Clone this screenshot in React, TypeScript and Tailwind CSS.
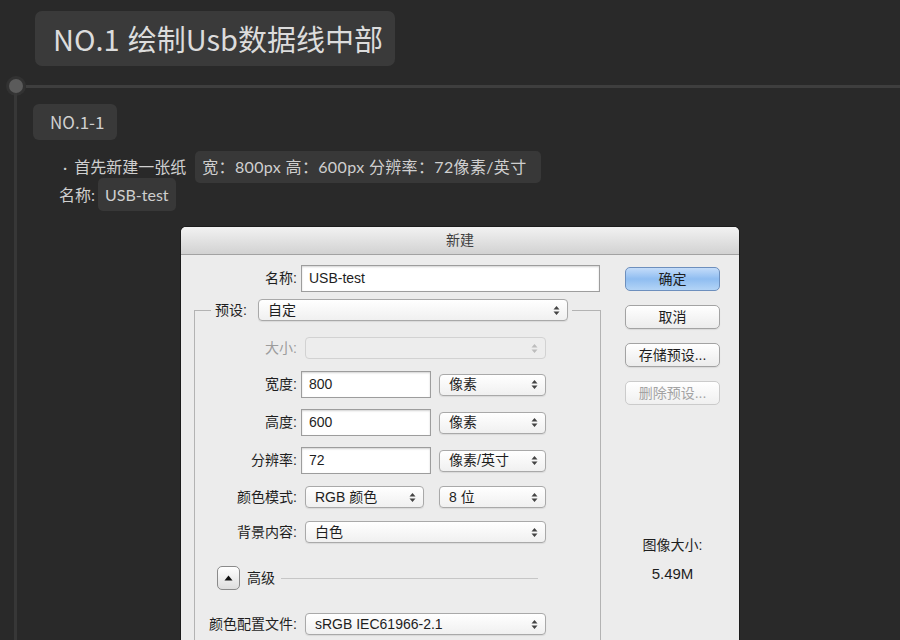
import React from 'react';

const Arrows = ({ light }: { light?: boolean }) => (
  <svg width="7" height="11" viewBox="0 0 7 11" className={light ? 'text-[#bdbdbd]' : 'text-[#444]'}>
    <path d="M0.5 4.5 L3.5 1 L6.5 4.5 Z M0.5 6.5 L3.5 10 L6.5 6.5 Z" fill="currentColor" />
  </svg>
);

const Select = ({ value, className, disabled }: { value?: string; className: string; disabled?: boolean }) => (
  <div
    className={`flex h-[22px] items-center justify-between rounded-[4px] border pl-[9px] pr-[7px] ${
      disabled
        ? 'border-[#d2d2d2] bg-[#ededed]'
        : 'border-[#a9a9a9] bg-linear-to-b from-white to-[#f0f0f0] shadow-[0_1px_1px_rgba(0,0,0,0.08)]'
    } ${className}`}
  >
    <span>{value}</span>
    <Arrows light={disabled} />
  </div>
);

const Input = ({ value, className }: { value: string; className: string }) => (
  <div
    className={`flex h-[27px] items-center border border-[#9d9d9d] bg-white pl-[7px] shadow-[inset_0_1px_2px_rgba(0,0,0,0.18)] ${className}`}
  >
    {value}
  </div>
);

const Label = ({ text, muted }: { text: string; muted?: boolean }) => (
  <div className={`w-[102px] text-right ${muted ? 'text-[#9c9c9c]' : ''}`}>{text}</div>
);

const Button = ({ text, primary, disabled }: { text: string; primary?: boolean; disabled?: boolean }) => (
  <div
    className={`flex h-[24px] w-[95px] items-center justify-center rounded-[5px] border ${
      primary
        ? 'border-[#6d8fbd] bg-linear-to-b from-[#c4dcf9] via-[#8fbdf1] to-[#b3d4f6]'
        : disabled
          ? 'border-[#cbcbcb] bg-linear-to-b from-white to-[#f0f0f0] text-[#a3a3a3]'
          : 'border-[#a3a3a3] bg-linear-to-b from-white to-[#ececec] shadow-[0_1px_1px_rgba(0,0,0,0.08)]'
    }`}
  >
    {text}
  </div>
);

export default function App() {
  return (
    <div className="flex h-[640px] w-[900px] flex-col overflow-hidden bg-[#292929] font-['Lato','Noto_Sans_CJK_SC',sans-serif]">
      {/* section title */}
      <div className="ml-[35px] mt-[11px] flex h-[55px] w-fit shrink-0 items-center rounded-[7px] bg-[#3a3a3a] pl-[18px] pr-[12px] font-['Noto_Sans_CJK_SC',sans-serif] text-[29px] text-[#dcdcdc]">
        <span>NO.1</span>
        <span className="ml-[8px]">绘制Usb数据线中部</span>
      </div>

      {/* timeline */}
      <div className="mt-[10px] flex h-[20px] shrink-0 items-center">
        <div className="ml-[6px] h-[20px] w-[20px] rounded-full bg-[#323232] p-[3px]">
          <div className="h-full w-full rounded-full bg-[#5b5b5b]" />
        </div>
        <div className="h-[3px] flex-1 bg-[#3e3e3e]" />
      </div>

      <div className="flex flex-1">
        <div className="-mt-[3px] ml-[14px] w-[3px] bg-[#373737]" />
        <div className="ml-[16px] flex flex-col items-start">
          <div className="mt-[8px] flex h-[36px] shrink-0 items-center rounded-[6px] bg-[#393939] pl-[17px] pr-[13px] font-['Noto_Sans_CJK_SC',sans-serif] text-[17px] text-[#d0d0d0]">
            NO.1-1
          </div>

          <div className="ml-[30px] mt-[11px] flex h-[32px] shrink-0 items-center text-[16px] text-[#cfcfcf]">
            <span>·</span>
            <span className="ml-[7px]">首先新建一张纸</span>
            <span className="ml-[9px] flex h-[32px] items-center rounded-[5px] bg-[#383838] pl-[7px] pr-[14px] tracking-[0.35px]">
              宽：800px 高：600px 分辨率：72像素/英寸
            </span>
          </div>
          <div className="-mt-[5px] ml-[26px] flex h-[33px] shrink-0 items-center text-[16px] text-[#cfcfcf]">
            <span>名称:</span>
            <span className="ml-[3px] flex h-[33px] items-center rounded-[5px] bg-[#383838] px-[7px]">USB-test</span>
          </div>

          {/* new document dialog */}
          <div className="ml-[148px] mt-[16px] h-[420px] w-[558px] shrink-0 rounded-t-[5px] bg-[#ececec] font-['Liberation_Sans','Noto_Sans_CJK_SC',sans-serif] text-[14px] text-[#1e1e1e] shadow-[0_0_0_1px_#1c1c1c]">
            <div className="flex h-[28px] items-center justify-center rounded-t-[5px] border-b border-[#a2a2a2] bg-linear-to-b from-[#f2f2f2] to-[#d2d2d2] text-[#3e3e3e]">
              新建
            </div>

            <div className="flex">
              <div className="w-[444px]">
                <div className="mt-[10px] flex items-center">
                  <div className="w-[116px] text-right">名称:</div>
                  <Input value="USB-test" className="ml-[4px] w-[299px]" />
                </div>

                <fieldset className="ml-[13px] mt-[7px] h-[400px] w-[407px] border border-[#b3b3b3]">
                  <legend className="ml-[16px] px-[4px]">
                    <div className="flex items-center">
                      <span>预设:</span>
                      <Select value="自定" className="ml-[11px] w-[310px]" />
                    </div>
                  </legend>

                  <div className="mt-[16px] flex h-[22px] items-center">
                    <Label text="大小:" muted />
                    <Select className="ml-[8px] w-[241px]" disabled />
                  </div>

                  <div className="mt-[12px] flex h-[27px] items-center">
                    <Label text="宽度:" />
                    <Input value="800" className="ml-[4px] w-[130px]" />
                    <Select value="像素" className="ml-[8px] w-[107px]" />
                  </div>

                  <div className="mt-[11px] flex h-[27px] items-center">
                    <Label text="高度:" />
                    <Input value="600" className="ml-[4px] w-[130px]" />
                    <Select value="像素" className="ml-[8px] w-[107px]" />
                  </div>

                  <div className="mt-[11px] flex h-[27px] items-center">
                    <Label text="分辨率:" />
                    <Input value="72" className="ml-[4px] w-[130px]" />
                    <Select value="像素/英寸" className="ml-[8px] w-[107px]" />
                  </div>

                  <div className="mt-[12px] flex h-[22px] items-center">
                    <Label text="颜色模式:" />
                    <Select value="RGB 颜色" className="ml-[8px] w-[119px]" />
                    <Select value="8 位" className="ml-[15px] w-[107px]" />
                  </div>

                  <div className="mt-[13px] flex h-[22px] items-center">
                    <Label text="背景内容:" />
                    <Select value="白色" className="ml-[8px] w-[241px]" />
                  </div>

                  <div className="ml-[22px] mt-[23px] flex h-[24px] items-center">
                    <div className="flex h-[24px] w-[23px] items-center justify-center rounded-[5px] border border-[#8a8a8a] bg-linear-to-b from-white to-[#dedede]">
                      <svg width="9" height="6" viewBox="0 0 9 6">
                        <path d="M0.5 5.5 L4.5 0.5 L8.5 5.5 Z" fill="#111" />
                      </svg>
                    </div>
                    <span className="ml-[7px]">高级</span>
                    <div className="ml-[6px] h-px w-[257px] bg-[#c6c6c6]" />
                  </div>

                  <div className="mt-[23px] flex h-[22px] items-center">
                    <Label text="颜色配置文件:" />
                    <Select value="sRGB IEC61966-2.1" className="ml-[8px] w-[241px]" />
                  </div>
                </fieldset>
              </div>

              <div className="flex w-[95px] flex-col">
                <div className="mt-[12px] flex flex-col gap-[14px]">
                  <Button text="确定" primary />
                  <Button text="取消" />
                  <Button text="存储预设..." />
                  <Button text="删除预设..." disabled />
                </div>
                <div className="mt-[130px] flex h-[20px] items-center justify-center">图像大小:</div>
                <div className="mt-[9px] flex h-[20px] items-center justify-center text-[15px]">5.49M</div>
              </div>
            </div>
          </div>
        </div>
      </div>
    </div>
  );
}
